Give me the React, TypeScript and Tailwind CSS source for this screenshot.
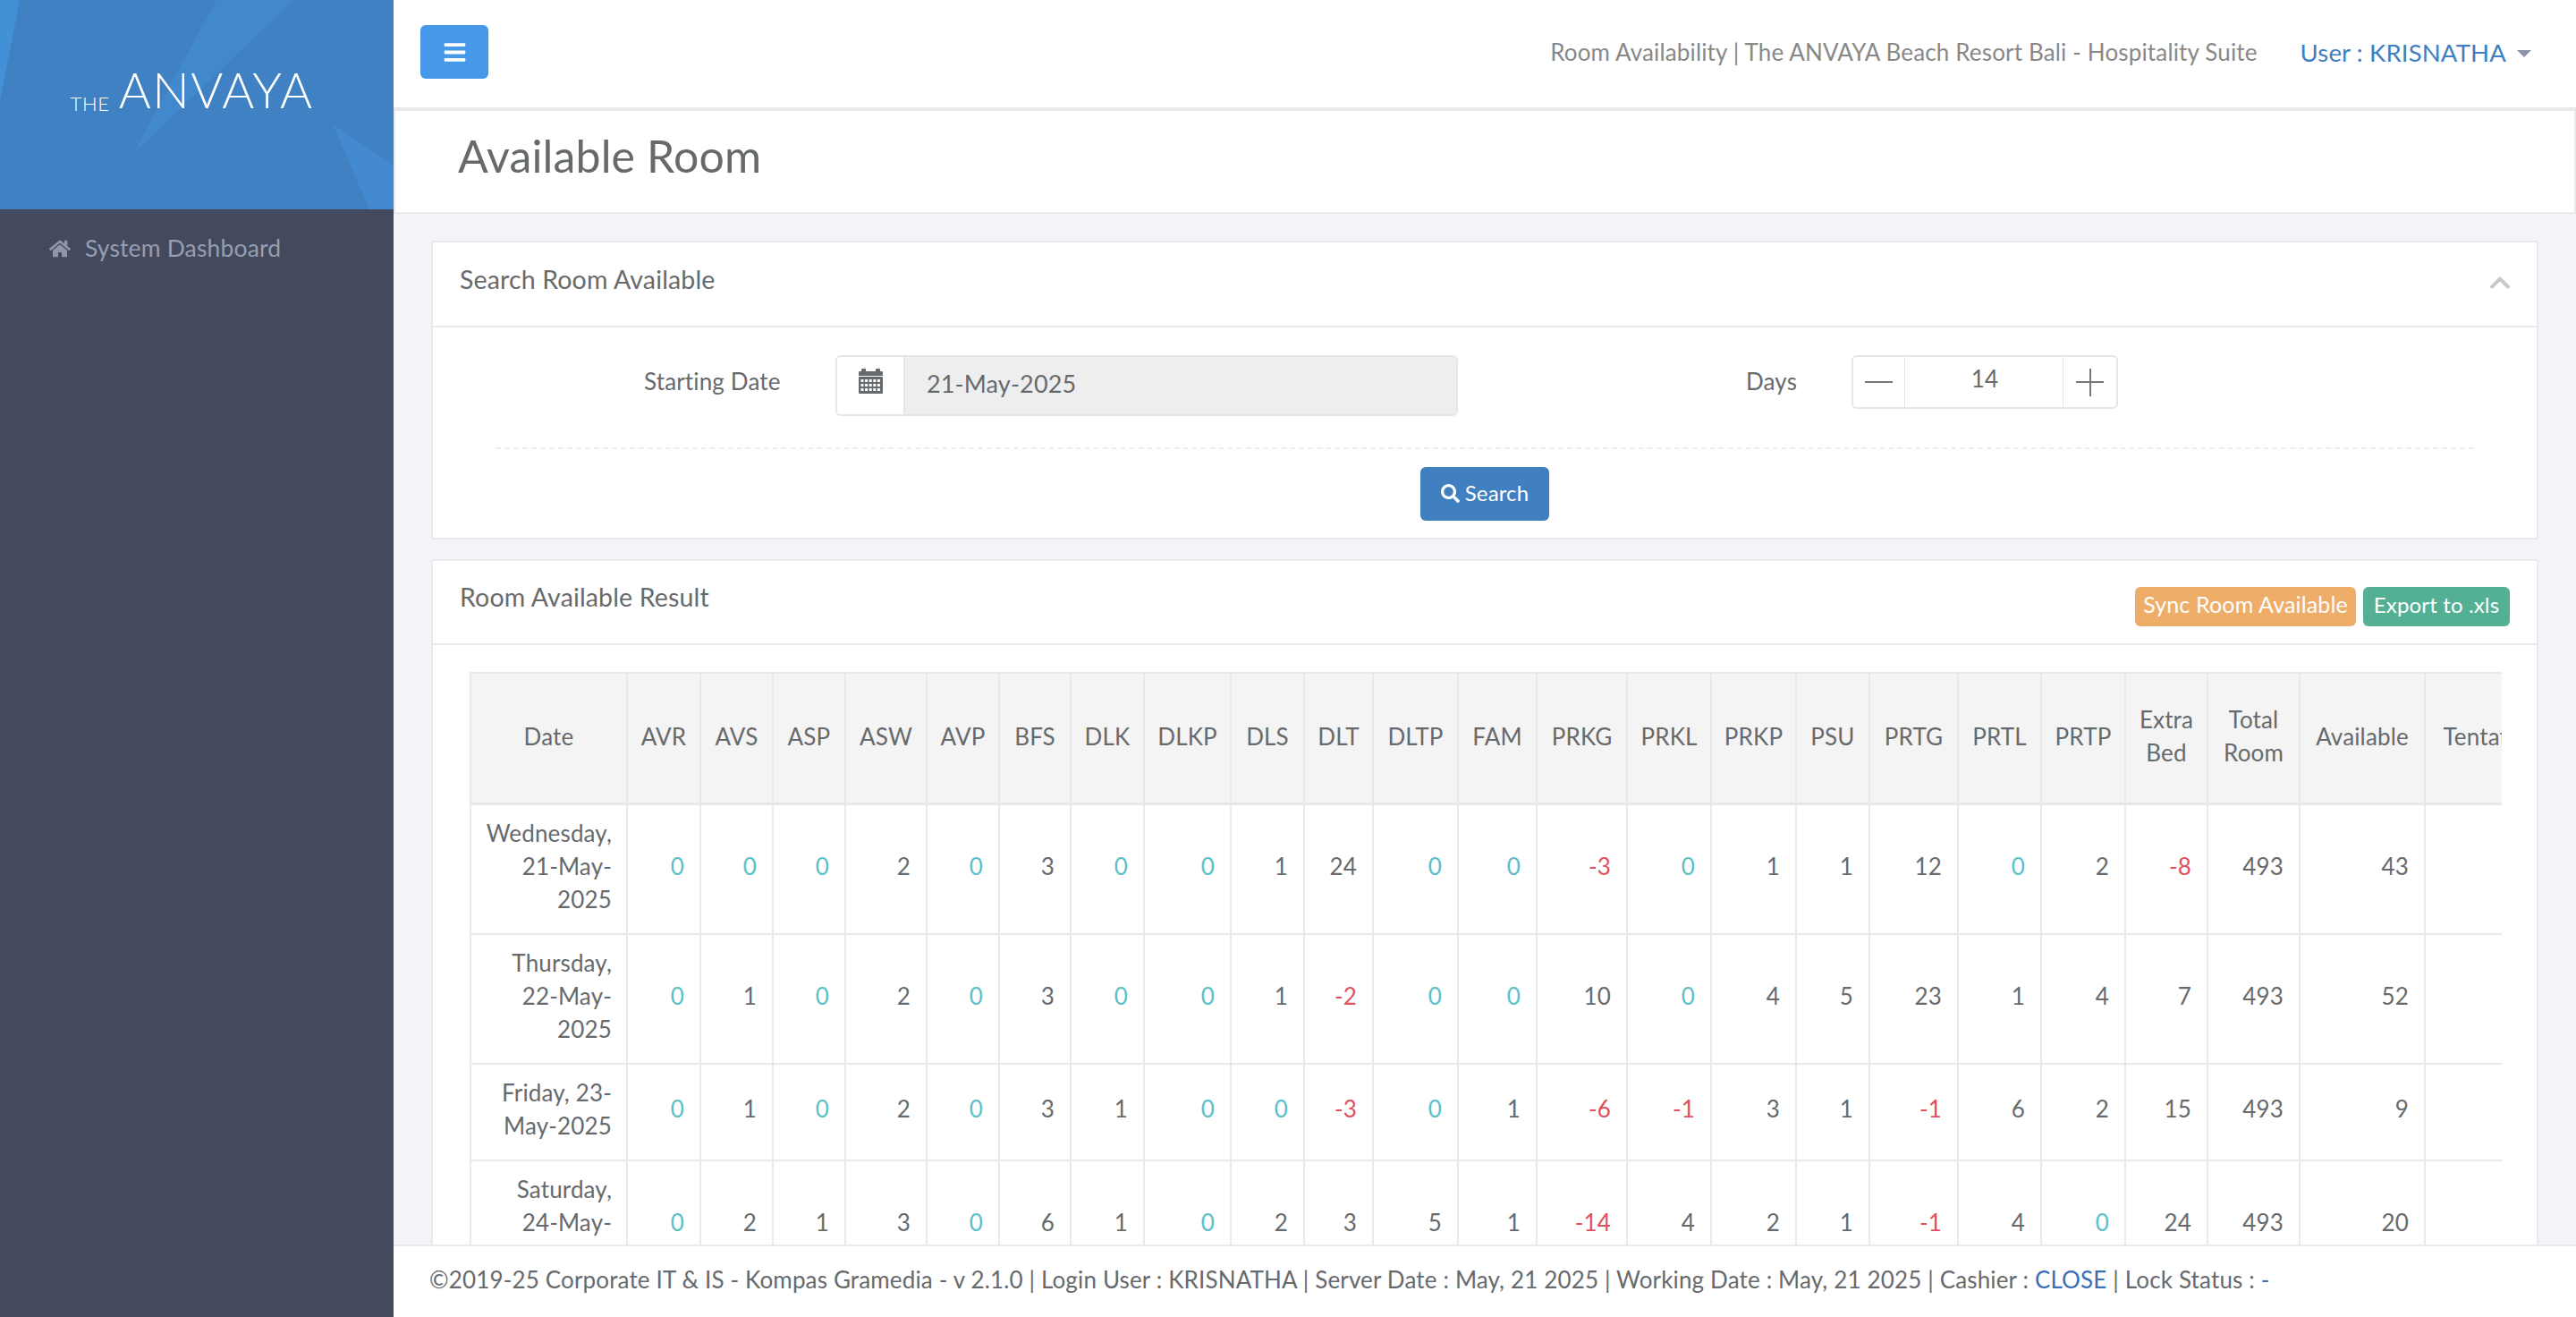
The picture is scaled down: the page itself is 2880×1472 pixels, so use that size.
import { FaBars, FaChevronUp, FaHome, FaSearch } from 'react-icons/fa';

const columns = [
  { label: 'AVR', width: 'w-[82px]' },
  { label: 'AVS', width: 'w-[81px]' },
  { label: 'ASP', width: 'w-[81px]' },
  { label: 'ASW', width: 'w-[91px]' },
  { label: 'AVP', width: 'w-[81px]' },
  { label: 'BFS', width: 'w-[80px]' },
  { label: 'DLK', width: 'w-[82px]' },
  { label: 'DLKP', width: 'w-[97px]' },
  { label: 'DLS', width: 'w-[82px]' },
  { label: 'DLT', width: 'w-[77px]' },
  { label: 'DLTP', width: 'w-[95px]' },
  { label: 'FAM', width: 'w-[88px]' },
  { label: 'PRKG', width: 'w-[101px]' },
  { label: 'PRKL', width: 'w-[94px]' },
  { label: 'PRKP', width: 'w-[95px]' },
  { label: 'PSU', width: 'w-[82px]' },
  { label: 'PRTG', width: 'w-[99px]' },
  { label: 'PRTL', width: 'w-[93px]' },
  { label: 'PRTP', width: 'w-[94px]' },
  { label: 'Extra Bed', width: 'w-[92px]' },
  { label: 'Total Room', width: 'w-[103px]' },
  { label: 'Available', width: 'w-[140px]' },
  { label: 'Tentative', width: 'w-[147px]' },
];

const rows = [
  { date: 'Wednesday, 21-May-2025', values: [0, 0, 0, 2, 0, 3, 0, 0, 1, 24, 0, 0, -3, 0, 1, 1, 12, 0, 2, -8, 493, 43] },
  { date: 'Thursday, 22-May-2025', values: [0, 1, 0, 2, 0, 3, 0, 0, 1, -2, 0, 0, 10, 0, 4, 5, 23, 1, 4, 7, 493, 52] },
  { date: 'Friday, 23-May-2025', values: [0, 1, 0, 2, 0, 3, 1, 0, 0, -3, 0, 1, -6, -1, 3, 1, -1, 6, 2, 15, 493, 9] },
  { date: 'Saturday, 24-May-2025', values: [0, 2, 1, 3, 0, 6, 1, 0, 2, 3, 5, 1, -14, 4, 2, 1, -1, 4, 0, 24, 493, 20] },
];

function valueColor(v: number) {
  if (v === 0) return 'text-[#5bc0c8]';
  if (v < 0) return 'text-[#e0505f]';
  return 'text-[#676a6c]';
}

// fa-calendar from the old icon font, react-icons has no close match
function CalendarIcon() {
  const dots = [];
  for (let r = 0; r < 3; r++) {
    for (let c = 0; c < 5; c++) {
      dots.push(<rect key={`${r}-${c}`} x={2.5 + c * 4.6} y={12 + r * 5} width="3" height="3" fill="#ffffff" />);
    }
  }
  return (
    <svg width="27" height="28" viewBox="0 0 27 28" fill="#676a6c">
      <path d="M3 1q0-1 1-1h3q1 0 1 1v2h11V1q0-1 1-1h3q1 0 1 1v2h2q1 0 1 1v4H0V4q0-1 1-1h2z" />
      <rect x="0" y="9" width="27" height="19" rx="1" />
      {dots}
    </svg>
  );
}

function Sidebar() {
  return (
    <aside className="w-[440px] shrink-0 bg-[#434a5e]">
      <div className="relative h-[234px] overflow-hidden bg-[#3f81c3]">
        <svg className="absolute inset-0 h-full w-full" viewBox="0 0 440 234" preserveAspectRatio="none">
          <polygon points="242,0 328,0 148,173" fill="#4288cd" />
          <polygon points="0,0 22,0 0,112" fill="#4290d5" />
          <polygon points="372,139 440,185 440,234 413,234" fill="#4289cf" />
        </svg>
        <div className="relative flex h-full items-start justify-center pr-[11px] pt-[68px] font-light text-white">
          <span className="mt-[36px] text-[22px] leading-[24px] tracking-[0.7px]">THE</span>
          <span className="ml-[10px] text-[55px] leading-[64px] tracking-[1.5px]">ANVAYA</span>
        </div>
      </div>
      <nav className="flex items-center gap-[16px] px-[55px] pb-[24px] pt-[25px] text-[26.5px] leading-[37px] text-[#979eb2]">
        <FaHome className="h-[24px] w-[24px] text-[#8f96aa]" />
        <span>System Dashboard</span>
      </nav>
    </aside>
  );
}

function TopBar() {
  return (
    <header className="flex h-[124px] shrink-0 items-start justify-between border-b-4 border-[#e9e9ea] bg-white pl-[30px] pr-[50px]">
      <button className="mt-[28px] flex h-[60px] w-[76px] items-center justify-center rounded-[6px] bg-[#4698e8] text-white">
        <FaBars className="h-[27px] w-[27px]" />
      </button>
      <div className="mt-[40px] flex items-center">
        <span className="text-[#888888]">Room Availability | The ANVAYA Beach Resort Bali - Hospitality Suite</span>
        <span className="ml-[48px] text-[27.5px] text-[#3f7fc0]">User : KRISNATHA</span>
        <span className="ml-[12px] mt-[2px] h-0 w-0 border-x-[8px] border-t-[8px] border-x-transparent border-t-[#8a93a8]" />
      </div>
    </header>
  );
}

function SearchPanel() {
  return (
    <section className="border-2 border-[#e9eaee] bg-white">
      <div className="flex h-[95px] items-start justify-between border-b-2 border-[#e9eaee] pl-[30px] pr-[28px] pt-[23px]">
        <span className="text-[28.5px]">Search Room Available</span>
        <FaChevronUp className="mt-[9px] h-[26px] w-[26px] text-[#c8c8c8]" />
      </div>
      <div className="px-[70px] pt-[31px]">
        <div className="flex items-start">
          <label className="ml-[166px] mt-[11px] w-[214px]">Starting Date</label>
          <div className="flex h-[68px] w-[696px] overflow-hidden rounded-[6px] border-2 border-[#e5e6e7]">
            <span className="flex w-[76px] items-start justify-center border-r-2 border-[#e5e6e7] pt-[13px]">
              <CalendarIcon />
            </span>
            <span className="flex-1 bg-[#eeeeee] pl-[24px] pt-[11px] text-[27px]">21-May-2025</span>
          </div>
          <label className="ml-[322px] mt-[11px] w-[118px]">Days</label>
          <div className="flex h-[60px] w-[298px] overflow-hidden rounded-[6px] border-2 border-[#e5e6e7]">
            <span className="flex w-[58px] items-center justify-center border-r border-[#e5e6e7]">
              <span className="h-[2px] w-[31px] bg-[#777777]" />
            </span>
            <span className="flex-1 pl-[2px] pt-[6px] text-center">14</span>
            <span className="relative flex w-[60px] items-center justify-center border-l border-[#e5e6e7]">
              <span className="h-[2px] w-[31px] bg-[#777777]" />
              <span className="absolute h-[31px] w-[2px] bg-[#777777]" />
            </span>
          </div>
        </div>
        <div className="mt-[35px] border-t-2 border-dashed border-[#eeeeee]" />
        <div className="flex justify-center pb-[19px] pt-[20px]">
          <button className="flex h-[60px] w-[144px] items-center justify-center gap-[6px] rounded-[6px] bg-[#4080c1] pb-[4px] text-[24px] text-white">
            <FaSearch className="mt-[2px] h-[21px] w-[21px]" />
            Search
          </button>
        </div>
      </div>
    </section>
  );
}

function ResultTable() {
  return (
    <div className="overflow-hidden">
      <table className="w-[2332px] table-fixed border-collapse">
        <thead>
          <tr className="h-[146px] bg-[#f4f4f5]">
            <th className="w-[175px] border-2 border-b-[3px] border-[#e7e8ea] px-[16px] pb-[3px] text-center font-normal">Date</th>
            {columns.map((c) => (
              <th key={c.label} className={`${c.width} border-2 border-b-[3px] border-[#e7e8ea] px-[12px] pb-[3px] text-center font-normal`}>
                {c.label}
              </th>
            ))}
          </tr>
        </thead>
        <tbody>
          {rows.map((row) => (
            <tr key={row.date}>
              <td className="border-2 border-[#e9eaec] px-[16px] pb-[19px] pt-[13px] text-right">{row.date}</td>
              {row.values.map((v, i) => (
                <td key={columns[i].label} className={`border-2 border-[#e9eaec] pb-[19px] pl-[8px] pr-[17px] pt-[13px] text-right ${valueColor(v)}`}>
                  {v}
                </td>
              ))}
              <td className="border-2 border-[#e9eaec]" />
            </tr>
          ))}
        </tbody>
      </table>
    </div>
  );
}

function ResultPanel() {
  return (
    <section className="mt-[22px] border-2 border-[#e9eaee] bg-white">
      <div className="flex h-[94px] items-start justify-between border-b-2 border-[#e9eaee] px-[30px] pt-[22px]">
        <span className="text-[28.5px]">Room Available Result</span>
        <div className="mt-[7px] flex gap-[8px] text-white">
          <button className="h-[44px] w-[247px] rounded-[6px] bg-[#eeae69] pb-[6px] text-[25px]">Sync Room Available</button>
          <button className="h-[44px] w-[164px] rounded-[6px] bg-[#54b095] pb-[6px] text-[24px]">Export to .xls</button>
        </div>
      </div>
      <div className="pl-[41px] pr-[39px] pt-[30px]">
        <ResultTable />
      </div>
    </section>
  );
}

export default function App() {
  return (
    <div className="flex h-screen overflow-hidden bg-[#f3f4f9] font-['Lato',sans-serif] text-[26px] leading-[37px] tracking-[0.15px] text-[#676a6c]">
      <Sidebar />
      <div className="flex min-w-0 flex-1 flex-col">
        <TopBar />
        <main className="min-h-0 flex-1 overflow-hidden">
          <div className="flex h-[115px] items-center border-x-2 border-b-2 border-[#e9eaee] bg-white pb-[14px] pl-[70px]">
            <h1 className="text-[50px] leading-[60px] font-normal">Available Room</h1>
          </div>
          <div className="px-[42px] pt-[30px]">
            <SearchPanel />
            <ResultPanel />
          </div>
        </main>
        <footer className="flex h-[81px] shrink-0 items-center border-t-2 border-[#e9eaee] bg-white pb-[4px] pl-[40px]">
          <span>
            ©2019-25 Corporate IT &amp; IS - Kompas Gramedia - v 2.1.0 | Login User : KRISNATHA | Server Date : May, 21 2025 | Working Date : May, 21 2025 | Cashier :{' '}
            <span className="text-[#3a6fb5]">CLOSE</span> | Lock Status : <span className="text-[#3a6fb5]">-</span>
          </span>
        </footer>
      </div>
    </div>
  );
}
